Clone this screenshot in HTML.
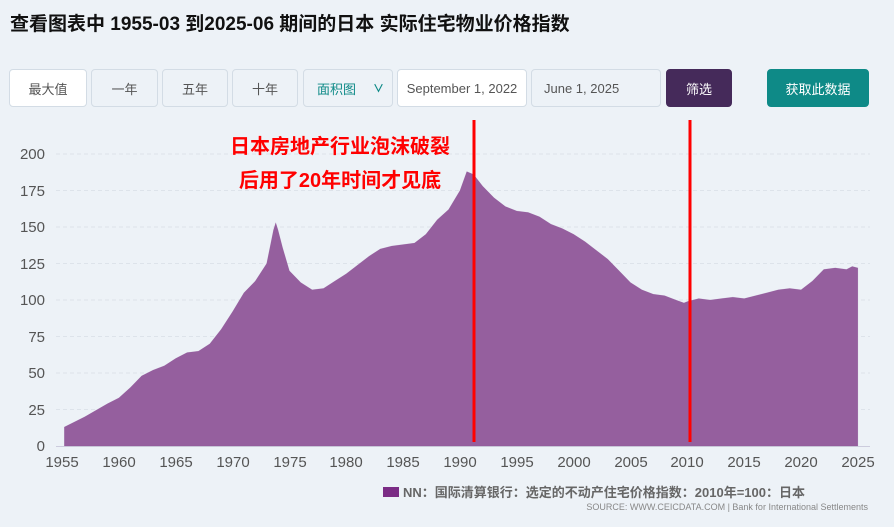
<!DOCTYPE html>
<html><head><meta charset="utf-8"><style>
*{margin:0;padding:0;box-sizing:border-box}
body{width:894px;height:527px;background:#edf2f7;font-family:"Liberation Sans","Noto Sans CJK SC",sans-serif;position:relative;overflow:hidden}
h1{position:absolute;left:10px;top:9px;font-size:19px;font-weight:bold;color:#111}
.b{position:absolute;top:69px;height:38px;border:1px solid #d3dce5;border-radius:4px;background:#edf2f7;font-size:13px;color:#555;display:flex;align-items:center;justify-content:center}
</style></head><body>
<h1>查看图表中 1955-03 到2025-06 期间的日本 实际住宅物业价格指数</h1>
<div class="b" style="left:9px;width:78px;background:#fff">最大值</div>
<div class="b" style="left:91px;width:67px">一年</div>
<div class="b" style="left:162px;width:66px">五年</div>
<div class="b" style="left:232px;width:66px">十年</div>
<div class="b" style="left:303px;width:90px;color:#0e8a87;justify-content:flex-start;padding-left:13px">面积图<span style="position:absolute;right:8px;font-size:11px;font-weight:bold">∨</span></div>
<div class="b" style="left:397px;width:130px;background:#fff">September 1, 2022</div>
<div class="b" style="left:531px;width:130px;justify-content:flex-start;padding-left:12px">June 1, 2025</div>
<div class="b" style="left:666px;width:66px;background:#452a5a;color:#fff;border-color:#452a5a">筛选</div>
<div class="b" style="left:767px;width:102px;background:#0e8a87;color:#fff;border-color:#0e8a87">获取此数据</div>
<svg width="894" height="527" style="position:absolute;left:0;top:0" font-family="Liberation Sans, sans-serif">
<g stroke="#dde3ea" stroke-dasharray="4,3">
<line x1="56" x2="870" y1="154" y2="154"/><line x1="56" x2="870" y1="190.5" y2="190.5"/><line x1="56" x2="870" y1="227" y2="227"/><line x1="56" x2="870" y1="263.5" y2="263.5"/><line x1="56" x2="870" y1="300" y2="300"/><line x1="56" x2="870" y1="336.5" y2="336.5"/><line x1="56" x2="870" y1="373" y2="373"/><line x1="56" x2="870" y1="409.5" y2="409.5"/>
</g>
<g font-size="15" fill="#555" text-anchor="end">
<text x="45" y="159">200</text><text x="45" y="196">175</text><text x="45" y="232">150</text><text x="45" y="269">125</text><text x="45" y="305">100</text><text x="45" y="342">75</text><text x="45" y="378">50</text><text x="45" y="415">25</text><text x="45" y="451">0</text>
</g>
<g font-size="15" fill="#555" text-anchor="middle">
<text x="62" y="467">1955</text><text x="119" y="467">1960</text><text x="176" y="467">1965</text><text x="233" y="467">1970</text><text x="290" y="467">1975</text><text x="346" y="467">1980</text><text x="403" y="467">1985</text><text x="460" y="467">1990</text><text x="517" y="467">1995</text><text x="574" y="467">2000</text><text x="631" y="467">2005</text><text x="687" y="467">2010</text><text x="744" y="467">2015</text><text x="801" y="467">2020</text><text x="858" y="467">2025</text>
</g>
<line x1="56" x2="870" y1="446.5" y2="446.5" stroke="#ccd"/>
<g transform="translate(62,446) scale(11.37,-1.46)">
<path fill="#955f9e" stroke="#7b3f8c" stroke-width="0.1" vector-effect="non-scaling-stroke" d="M0.2,0 L0.2,13 L2,20 L4,29 L5,33 L6,40 L7,48 L8,52 L9,55 L10,60 L11,64 L12,65 L13,70 L14,80 L15,92 L16,105 L17,113 L18,125 L18.6,148 L18.8,153 L19,148 L19.4,136 L20,120 L20.5,116 L21,112 L22,107 L23,108 L24,113 L25,118 L26,124 L27,130 L28,135 L29,137 L30,138 L31,139 L32,145 L33,155 L34,162 L35,175 L35.6,188 L36.2,186 L37,178 L38,170 L39,164 L40,161 L41,160 L42,157 L43,152 L44,149 L45,145 L46,140 L47,134 L48,128 L49,120 L50,112 L51,107 L52,104 L53,103 L54,100 L54.7,98 L55,99 L56,101 L57,100 L58,101 L59,102 L60,101 L61,103 L62,105 L63,107 L64,108 L65,107 L66,113 L67,121 L68,122 L69,121 L69.5,123 L70,122 L70,0 Z"/>
</g>
<line x1="474" x2="474" y1="120" y2="442" stroke="#f00" stroke-width="3"/>
<line x1="690" x2="690" y1="120" y2="442" stroke="#f00" stroke-width="3"/>
<g font-family="Liberation Sans, Noto Sans CJK SC, sans-serif" font-weight="bold" fill="#f00" font-size="20" text-anchor="middle">
<text x="340" y="153">日本房地产行业泡沫破裂</text><text x="340" y="187">后用了20年时间才见底</text>
</g>
<rect x="383" y="487" width="16" height="10" fill="#7b2c85"/>
<text x="403" y="497" font-family="Liberation Sans, Noto Sans CJK SC, sans-serif" font-size="13" font-weight="bold" fill="#666">NN：国际清算银行：选定的不动产住宅价格指数：2010年=100：日本</text>
<text x="868" y="510" text-anchor="end" font-size="9" fill="#888">SOURCE: WWW.CEICDATA.COM | Bank for International Settlements</text>
</svg>
</body></html>
